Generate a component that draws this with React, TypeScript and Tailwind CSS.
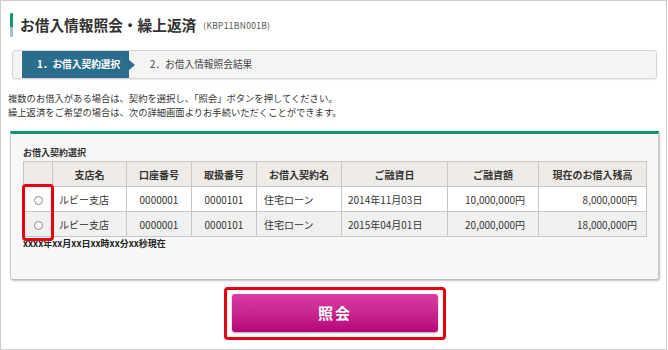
const rows = [
  {
    branch: 'ルビー支店',
    account: '0000001',
    handle: '0000101',
    name: '住宅ローン',
    date: '2014年11月03日',
    amount: '10,000,000円',
    balance: '8,000,000円',
    bg: 'bg-white',
  },
  {
    branch: 'ルビー支店',
    account: '0000001',
    handle: '0000101',
    name: '住宅ローン',
    date: '2015年04月01日',
    amount: '20,000,000円',
    balance: '18,000,000円',
    bg: 'bg-[#f0f0f0]',
  },
]

const cell = 'border border-[#c6c6c6] h-[25px]'

export default function App() {
  return (
    <div className="w-[667px] h-[350px] border border-[#cdcdcd] bg-white text-[#333] font-['Noto_Sans_CJK_JP','Liberation_Sans',sans-serif]">
      {/* タイトル */}
      <div className="flex items-center mt-[11px] ml-[9px] h-[25px]">
        <div className="w-[3px] h-[24px] rounded-[1px] bg-gradient-to-b from-[#17996f] from-60% to-[#9ec3d6] to-60%" />
        <h1 className="ml-[7px] text-[14.7px] leading-[25px] font-bold text-[#333]">
          お借入情報照会・繰上返済
        </h1>
        <span className="ml-[7px] text-[8.5px] text-[#555] mt-[2px] tracking-[0.3px]">(KBP11BN001B)</span>
      </div>

      {/* ステップ */}
      <div className="mt-[13px] ml-[11px] w-[645px] h-[29px] flex items-stretch border border-[#d6d6d6] rounded-[3px] bg-[#f4f4f4] shadow-[0_1px_1px_rgba(0,0,0,0.08)] pl-[9px]">
        <div className="w-[107px] bg-[#2a6d8d] flex items-center pl-[15px] text-white text-[9.7px] font-bold">
          1．お借入契約選択
        </div>
        <div className="self-center w-0 h-0 border-y-[5px] border-y-transparent border-l-[6px] border-l-[#2a6d8d]" />
        <div className="flex items-center ml-[15px] text-[9.7px] text-[#444]">
          2．お借入情報照会結果
        </div>
      </div>

      {/* 説明 */}
      <div className="mt-[12px] ml-[7px] text-[9.3px] leading-[14px] text-[#333]">
        <p>複数のお借入がある場合は、契約を選択し、「照会」ボタンを押してください。</p>
        <p>繰上返済をご希望の場合は、次の詳細画面よりお手続いただくことができます。</p>
      </div>

      {/* 契約一覧 */}
      <div className="mt-[12px] ml-[9px] w-[649px] h-[149px] border-t-[3px] border-t-[#0d9474] border-x border-b border-x-[#cacaca] border-b-[#bdbdbd] rounded-b-[3px] bg-[#f7f7f7] shadow-[1px_1px_2px_rgba(0,0,0,0.25)] pt-[13px] pl-[12px]">
        <div className="text-[9px] leading-[12px] font-bold">お借入契約選択</div>
        <div className="relative mt-[2px] w-[623px]">
          <table className="w-[623px] border-collapse table-fixed text-[10px] text-[#333]">
            <colgroup>
              <col className="w-[29px]" />
              <col className="w-[74px]" />
              <col className="w-[65px]" />
              <col className="w-[65px]" />
              <col className="w-[85px]" />
              <col className="w-[106px]" />
              <col className="w-[91px]" />
              <col className="w-[108px]" />
            </colgroup>
            <thead>
              <tr className="bg-[#eeeae6] font-bold">
                <th className={cell}></th>
                <th className={cell}>支店名</th>
                <th className={cell}>口座番号</th>
                <th className={cell}>取扱番号</th>
                <th className={cell}>お借入契約名</th>
                <th className={cell}>ご融資日</th>
                <th className={cell}>ご融資額</th>
                <th className={cell}>現在のお借入残高</th>
              </tr>
            </thead>
            <tbody>
              {rows.map((r, i) => (
                <tr key={i} className={r.bg}>
                  <td className={`${cell} text-center`}>
                    <span className="inline-block w-[9px] h-[9px] rounded-full border border-[#8a8a8a] bg-white align-middle" />
                  </td>
                  <td className={`${cell} pl-[6px]`}>{r.branch}</td>
                  <td className={`${cell} text-center`}>{r.account}</td>
                  <td className={`${cell} text-center`}>{r.handle}</td>
                  <td className={`${cell} pl-[7px]`}>{r.name}</td>
                  <td className={`${cell} pl-[6px]`}>{r.date}</td>
                  <td className={`${cell} text-right pr-[13px]`}>{r.amount}</td>
                  <td className={`${cell} text-right pr-[9px]`}>{r.balance}</td>
                </tr>
              ))}
            </tbody>
          </table>
          {/* 注目枠 */}
          <div className="absolute left-[-1px] top-[23px] w-[32px] h-[57px] border-[3px] border-[#e60012] rounded-[4px]" />
        </div>
        <div className="mt-[1px] text-[9px] leading-[12px] font-semibold text-[#222]">
          xxxx年xx月xx日xx時xx分xx秒現在
        </div>
      </div>

      {/* ボタン */}
      <div className="mt-[7px] ml-[223px] w-[222px] h-[53px] border-[3px] border-[#e60012] rounded-[4px] pt-[4px] pl-[5px]">
        <button className="w-[206px] h-[38px] rounded-[3px] bg-gradient-to-b from-[#dc3ca5] to-[#b5007a] shadow-[0_1px_2px_rgba(0,0,0,0.35)] text-white text-[15px] font-bold tracking-[2px]">
          照会
        </button>
      </div>
    </div>
  )
}
